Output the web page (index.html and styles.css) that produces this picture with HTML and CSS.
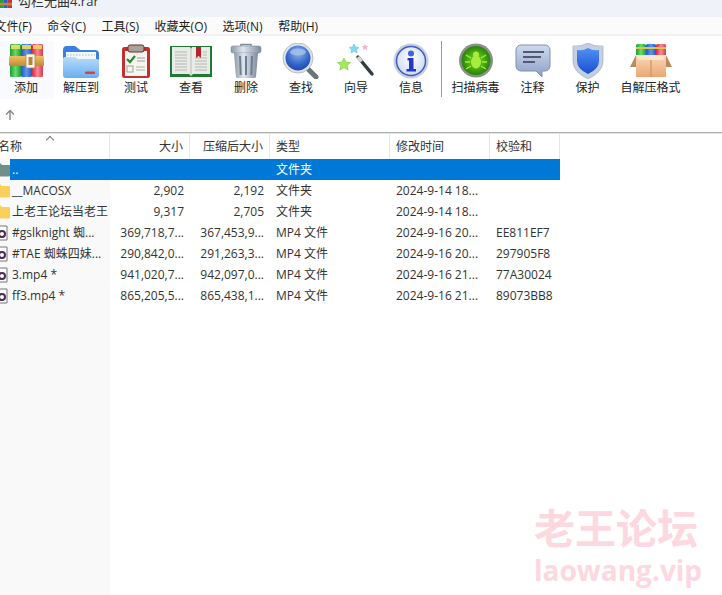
FILE: index.html
```html
<!DOCTYPE html>
<html lang="zh-CN">
<head>
<meta charset="utf-8">
<title>勾栏无曲4.rar</title>
<link rel="stylesheet" href="styles.css">
</head>
<body>
<div class="app">
  <header class="titlebar">
    <svg class="title-icon" viewBox="0 0 14 14"><rect x="0" width="4.5" height="14" fill="#2f9a3c"/><rect x="4.5" width="4.5" height="14" fill="#2a5fc4"/><rect x="9" width="5" height="14" fill="#c8323c"/><rect y="8" width="14" height="3" fill="#b98a3c"/></svg>
    <span class="title-text">勾栏无曲4.rar</span>
  </header>
  <nav class="menubar">
    <span class="menu-item">文件(F)</span><span class="menu-item">命令(C)</span><span class="menu-item">工具(S)</span><span class="menu-item">收藏夹(O)</span><span class="menu-item">选项(N)</span><span class="menu-item">帮助(H)</span>
  </nav>
  <section class="toolbar">
    <div class="tool tool-hover">
      <svg class="tool-icon" viewBox="0 0 44 36">
        <defs>
          <linearGradient id="gGreen" x1="0" y1="0" x2="1" y2="0"><stop offset="0" stop-color="#1f9a3a"/><stop offset=".5" stop-color="#66dc6c"/><stop offset="1" stop-color="#1f9a3a"/></linearGradient>
          <linearGradient id="gBlue" x1="0" y1="0" x2="1" y2="0"><stop offset="0" stop-color="#2457c8"/><stop offset=".5" stop-color="#5a97f0"/><stop offset="1" stop-color="#2457c8"/></linearGradient>
          <linearGradient id="gRed" x1="0" y1="0" x2="1" y2="0"><stop offset="0" stop-color="#d22a3c"/><stop offset=".5" stop-color="#f88a98"/><stop offset="1" stop-color="#d83a4c"/></linearGradient>
          <linearGradient id="gTan" x1="0" y1="0" x2="0" y2="1"><stop offset="0" stop-color="#f2c060"/><stop offset="1" stop-color="#c08a34"/></linearGradient>
          <linearGradient id="gFolder" x1="0" y1="0" x2="0" y2="1"><stop offset="0" stop-color="#b8dcfb"/><stop offset="1" stop-color="#6aaef0"/></linearGradient>
          <linearGradient id="gSteel" x1="0" y1="0" x2="1" y2="0"><stop offset="0" stop-color="#8b98a8"/><stop offset=".4" stop-color="#dfe6ee"/><stop offset="1" stop-color="#7d8a9c"/></linearGradient>
          <radialGradient id="gLens" cx=".5" cy=".3" r=".8"><stop offset="0" stop-color="#8db4ea"/><stop offset=".6" stop-color="#2f63c8"/><stop offset="1" stop-color="#1b3f9c"/></radialGradient>
          <radialGradient id="gBug" cx=".5" cy=".5" r=".55"><stop offset="0" stop-color="#7be01e"/><stop offset="1" stop-color="#1f7a08"/></radialGradient>
          <linearGradient id="gNote" x1="0" y1="0" x2="0" y2="1"><stop offset="0" stop-color="#cfdaf0"/><stop offset="1" stop-color="#8d9fc4"/></linearGradient>
          <linearGradient id="gShield" x1="0" y1="0" x2="0" y2="1"><stop offset="0" stop-color="#4f90f5"/><stop offset="1" stop-color="#1c4fd0"/></linearGradient>
          <linearGradient id="gBox" x1="0" y1="0" x2="0" y2="1"><stop offset="0" stop-color="#f9d9b4"/><stop offset="1" stop-color="#eaa874"/></linearGradient>
          <radialGradient id="gInfo" cx=".5" cy=".4" r=".6"><stop offset="0" stop-color="#ffffff"/><stop offset="1" stop-color="#cfd9f2"/></radialGradient>
        </defs>
        <rect x="6" y="1" width="11" height="33" rx="1.5" fill="url(#gGreen)"/>
        <rect x="17" y="1" width="11" height="33" rx="1.5" fill="url(#gBlue)"/>
        <rect x="28" y="1" width="11" height="33" rx="1.5" fill="url(#gRed)"/>
        <rect x="7" y="2" width="9" height="4" fill="#e2dc5a"/><rect x="18" y="2" width="9" height="4" fill="#e2d45a"/><rect x="29" y="2" width="9" height="4" fill="#f2cc5a"/>
        <rect x="5" y="13" width="35" height="10" rx="1" fill="url(#gTan)"/>
        <rect x="22" y="11" width="9" height="14" rx="1" fill="#f8f5ec" stroke="#a88a50" stroke-width=".8"/>
        <rect x="24.5" y="14" width="4" height="8" fill="#b8843a"/>
      </svg>
      <span class="tool-label">添加</span>
    </div>
    <div class="tool">
      <svg class="tool-icon" viewBox="0 0 44 36">
        <path d="M4 7a4 4 0 0 1 4-4h8l5 4h15a4 4 0 0 1 4 4v6H4z" fill="#3b80e0"/>
        <rect x="7" y="9" width="30" height="9" fill="#f3f7fc"/>
        <path d="M8 12h28" stroke="#a8b8d0" stroke-dasharray="1.5 1.5" stroke-width="1"/>
        <path d="M4 16q0-2 2-2h10l3 2h19q2 0 2 2v14a3 3 0 0 1-3 3H7a3 3 0 0 1-3-3z" fill="url(#gFolder)"/>
        <rect x="26" y="28.5" width="10" height="2.5" rx="1" fill="#d8423c"/>
      </svg>
      <span class="tool-label">解压到</span>
    </div>
    <div class="tool">
      <svg class="tool-icon" viewBox="0 0 44 36">
        <rect x="8" y="4" width="28" height="31" rx="2.5" fill="#c42f30"/>
        <rect x="11" y="8" width="22" height="25" fill="#f7f5f0"/>
        <rect x="14" y="2" width="16" height="7" rx="2" fill="#a8a29a" stroke="#7a2420" stroke-width="1"/>
        <path d="M13 16l3 3 5-6" fill="none" stroke="#2e8a2c" stroke-width="2.2"/>
        <path d="M23 15h8M23 18h8" stroke="#9a9a9a"/>
        <rect x="13" y="23" width="6" height="6" fill="none" stroke="#a0a0a0"/>
        <path d="M22 24h9M22 27h9" stroke="#b0b0b0"/>
      </svg>
      <span class="tool-label">测试</span>
    </div>
    <div class="tool">
      <svg class="tool-icon" viewBox="0 0 44 36">
        <path d="M1 3h42v31H1z" fill="#1f7a34"/>
        <path d="M3 4h18l1 2 1-2h18v27H24l-2 2-2-2H3z" fill="#e9ebe6"/>
        <path d="M22 6v26" stroke="#b9bdb6"/>
        <path d="M6 9h12M6 12h12M6 15h12M6 18h12M6 21h12M6 24h12M6 27h12M26 15h12M26 18h12M26 21h12M26 24h12M26 27h12M34 9h4M34 12h4" stroke="#b4b8b2"/>
        <path d="M27 4h5v11l-2.500-2-2.500 2z" fill="#b8222c"/>
      </svg>
      <span class="tool-label">查看</span>
    </div>
    <div class="tool">
      <svg class="tool-icon" viewBox="0 0 44 36">
        <path d="M17 3V1.500h10V3" fill="none" stroke="#7d8a9c" stroke-width="1.500"/>
        <rect x="7" y="3" width="30" height="7" rx="2" fill="url(#gSteel)" stroke="#7d8a9c" stroke-width=".6"/>
        <path d="M10 10h24l-2 24a2 2 0 0 1-2 1H14a2 2 0 0 1-2-1z" fill="url(#gSteel)"/>
        <path d="M16 13l.7 19M22 13v19M28 13l-.7 19" stroke="#6f7d90" stroke-width="2"/>
      </svg>
      <span class="tool-label">删除</span>
    </div>
    <div class="tool">
      <svg class="tool-icon" viewBox="0 0 44 36">
        <path d="M28 25l9 9" stroke="#6b7478" stroke-width="5" stroke-linecap="round"/>
        <circle cx="19" cy="15" r="15" fill="#dfe4ec" stroke="#b4bcc8"/>
        <circle cx="19" cy="15" r="12.500" fill="url(#gLens)"/>
        <ellipse cx="19" cy="9" rx="8" ry="3.500" fill="#a6c2ee" opacity=".8"/>
      </svg>
      <span class="tool-label">查找</span>
    </div>
    <div class="tool">
      <svg class="tool-icon" viewBox="0 0 44 36">
        <path d="M24 14l14 17" stroke="#333c40" stroke-width="3.500" stroke-linecap="round"/>
        <path d="M24 14l3.500 4.500" stroke="#d5d5d5" stroke-width="3.500"/>
        <path d="M10 15l2 4 4.500.5-3.300 3 1 4.500L10 24.500 5.800 27l1-4.500-3.300-3L8 19z" fill="#a6e85a" stroke="#79c43a" stroke-width=".6"/>
        <path d="M20 1l1.500 3 3.500.4-2.500 2.300.7 3.300-3.200-1.700-3 1.700.6-3.300-2.400-2.300 3.300-.4z" fill="#7fdcf2" stroke="#4fc0e0" stroke-width=".5"/>
        <path d="M31 1l1 2 2.300.3-1.700 1.500.5 2.200-2.100-1.100-2 1.100.4-2.200-1.600-1.500 2.200-.3z" fill="#f4b4c8"/>
      </svg>
      <span class="tool-label">向导</span>
    </div>
    <div class="tool">
      <svg class="tool-icon" viewBox="0 0 44 36">
        <circle cx="22" cy="18" r="17.500" fill="#c6cfe0"/>
        <circle cx="22" cy="18" r="14.500" fill="url(#gInfo)" stroke="#3f5cc0" stroke-width="1.500"/>
        <circle cx="22" cy="10.500" r="3" fill="#3f66d0"/>
        <path d="M18.500 15h6v11h2.500v2.500H17.500V26h2.500v-8.500h-1.500z" fill="#2438c8"/>
      </svg>
      <span class="tool-label">信息</span>
    </div>
    <div class="tool-sep"></div>
    <div class="tool">
      <svg class="tool-icon" viewBox="0 0 44 36">
        <circle cx="22" cy="17.500" r="17" fill="#8a8f8a"/>
        <circle cx="22" cy="17.500" r="14.500" fill="url(#gBug)"/>
        <ellipse cx="22" cy="19" rx="5" ry="6.500" fill="#a8ec3c"/>
        <circle cx="22" cy="11.500" r="3" fill="#a8ec3c"/>
        <path d="M17 15l-5-3M27 15l5-3M16 19h-5M28 19h5M17 23l-5 3M27 23l5 3" stroke="#a8ec3c" stroke-width="1.300"/>
      </svg>
      <span class="tool-label">扫描病毒</span>
    </div>
    <div class="tool">
      <svg class="tool-icon" viewBox="0 0 44 36">
        <path d="M10 2h24a5 5 0 0 1 5 5v16a5 5 0 0 1-5 5h-3v6l-6-6H10a5 5 0 0 1-5-5V7a5 5 0 0 1 5-5z" fill="url(#gNote)" stroke="#7f90b4"/>
        <path d="M12 9h21M12 14h18M12 19h12" stroke="#4f5a72" stroke-width="2"/>
      </svg>
      <span class="tool-label">注释</span>
    </div>
    <div class="tool">
      <svg class="tool-icon" viewBox="0 0 44 36">
        <path d="M22 0q7 4 15 3v15q0 11-15 18Q7 29 7 18V3q8 1 15-3z" fill="#c4cfe0" stroke="#97a6bd" stroke-width=".6"/>
        <path d="M22 5q5 3 11 2v11q0 8-11 13-11-5-11-13V7q6 1 11-2z" fill="url(#gShield)"/>
      </svg>
      <span class="tool-label">保护</span>
    </div>
    <div class="tool">
      <svg class="tool-icon" viewBox="0 0 44 36">
        <rect x="7" y="1" width="10" height="20" rx="1.500" fill="url(#gGreen)"/>
        <rect x="17" y="1" width="10" height="20" rx="1.500" fill="url(#gBlue)"/>
        <rect x="27" y="1" width="10" height="20" rx="1.500" fill="url(#gRed)"/>
        <rect x="7" y="4" width="30" height="2" fill="#d8c84a"/>
        <path d="M7 12h30v22H7z" fill="url(#gBox)"/>
        <path d="M7 12L1 24h6zM37 12l6 12h-6z" fill="#b98a5c"/>
        <path d="M7 12h30l-3 5H10z" fill="#fbe6c8"/>
        <path d="M22 17v17" stroke="#c98a58"/>
      </svg>
      <span class="tool-label">自解压格式</span>
    </div>
  </section>
  <div class="pathbar">
    <svg class="up-icon" viewBox="0 0 12 12"><path d="M6 11V2M2 5.500L6 1.500l4 4" fill="none" stroke="#8a8a8a" stroke-width="1.500"/></svg>
  </div>
  <main class="list">
    <div class="row head">
      <div class="cell name sep"><span class="caret"></span><span class="head-name">名称</span></div>
      <div class="cell num sep">大小</div>
      <div class="cell num sep">压缩后大小</div>
      <div class="cell sep">类型</div>
      <div class="cell sep">修改时间</div>
      <div class="cell sep">校验和</div>
    </div>
    <div class="row selected">
      <div class="cell name"><svg class="file-icon" viewBox="0 0 16 16"><path d="M1 2q0-1 1-1h4l2 2h7q1 0 1 1v9.500q0 1-1 1H2q-1 0-1-1z" fill="#6f8f8a"/></svg><span class="dots">..</span></div>
      <div class="cell num"></div><div class="cell num"></div><div class="cell">文件夹</div><div class="cell"></div><div class="cell"></div>
    </div>
    <div class="row">
      <div class="cell name"><svg class="file-icon" viewBox="0 0 16 16"><path d="M1 2q0-1 1-1h4l2 2h7q1 0 1 1v9.500q0 1-1 1H2q-1 0-1-1z" fill="#fad05a"/></svg>__MACOSX</div>
      <div class="cell num">2,902</div><div class="cell num">2,192</div><div class="cell">文件夹</div><div class="cell">2024-9-14 18...</div><div class="cell"></div>
    </div>
    <div class="row">
      <div class="cell name"><svg class="file-icon" viewBox="0 0 16 16"><path d="M1 2q0-1 1-1h4l2 2h7q1 0 1 1v9.500q0 1-1 1H2q-1 0-1-1z" fill="#fad05a"/></svg>上老王论坛当老王</div>
      <div class="cell num">9,317</div><div class="cell num">2,705</div><div class="cell">文件夹</div><div class="cell">2024-9-14 18...</div><div class="cell"></div>
    </div>
    <div class="row">
      <div class="cell name"><svg class="file-icon" viewBox="0 0 16 16"><path d="M2 1h11v14H2z" fill="#fff" stroke="#777"/><circle cx="8" cy="9" r="3" fill="none" stroke="#4a2c50" stroke-width="2"/></svg>#gslknight 蜘...</div>
      <div class="cell num">369,718,7...</div><div class="cell num">367,453,9...</div><div class="cell">MP4 文件</div><div class="cell">2024-9-16 20...</div><div class="cell">EE811EF7</div>
    </div>
    <div class="row">
      <div class="cell name"><svg class="file-icon" viewBox="0 0 16 16"><path d="M2 1h11v14H2z" fill="#fff" stroke="#777"/><circle cx="8" cy="9" r="3" fill="none" stroke="#4a2c50" stroke-width="2"/></svg>#TAE 蜘蛛四妹...</div>
      <div class="cell num">290,842,0...</div><div class="cell num">291,263,3...</div><div class="cell">MP4 文件</div><div class="cell">2024-9-16 20...</div><div class="cell">297905F8</div>
    </div>
    <div class="row">
      <div class="cell name"><svg class="file-icon" viewBox="0 0 16 16"><path d="M2 1h11v14H2z" fill="#fff" stroke="#777"/><circle cx="8" cy="9" r="3" fill="none" stroke="#4a2c50" stroke-width="2"/></svg>3.mp4 *</div>
      <div class="cell num">941,020,7...</div><div class="cell num">942,097,0...</div><div class="cell">MP4 文件</div><div class="cell">2024-9-16 21...</div><div class="cell">77A30024</div>
    </div>
    <div class="row">
      <div class="cell name"><svg class="file-icon" viewBox="0 0 16 16"><path d="M2 1h11v14H2z" fill="#fff" stroke="#777"/><circle cx="8" cy="9" r="3" fill="none" stroke="#4a2c50" stroke-width="2"/></svg>ff3.mp4 *</div>
      <div class="cell num">865,205,5...</div><div class="cell num">865,438,1...</div><div class="cell">MP4 文件</div><div class="cell">2024-9-16 21...</div><div class="cell">89073BB8</div>
    </div>
  </main>
</div>
<div class="watermark">
  <div class="wm-cn">老王论坛</div>
  <div class="wm-en">laowang.vip</div>
</div>
</body>
</html>
```
FILE: styles.css
```css
* { box-sizing: border-box; }
html, body { margin: 0; height: 100%; overflow: hidden; background: #fff; }
body {
  font-family: "Open Sans", "Noto Sans CJK SC", sans-serif;
  font-size: 12px;
  color: #1c1c1c;
}
.app { display: flex; flex-direction: column; height: 595px; }

.titlebar {
  height: 17px;
  flex: none;
  background: #eff2f8;
  display: flex;
  align-items: flex-end;
  overflow: hidden;
}
.title-icon { width: 12px; height: 12px; flex: none; margin-bottom: 9px; }
.title-text { font-size: 13px; line-height: 18px; margin: 0 0 0 6px; position: relative; top: -7px; color: #333; }

.menubar {
  height: 19px;
  flex: none;
  display: flex;
  align-items: center;
  margin-left: -5.5px;
  background: #fbfbfc;
  border-bottom: 2px solid #f1f1f1;
}
.menu-item { margin-right: 15.5px; white-space: nowrap; }

.toolbar {
  height: 63px;
  flex: none;
  display: flex;
  align-items: flex-start;
  margin-left: -1.5px;
  padding-top: 5px;
}
.tool {
  min-width: 55px;
  padding: 2px 5.5px 0;
  height: 58px;
  display: flex;
  flex-direction: column;
  align-items: center;
  flex: none;
}
.tool-hover { background: #f8fafd; border-radius: 2px; }
.tool-icon { width: 44px; height: 36px; flex: none; }
.tool-label { line-height: 16px; margin-top: 1px; white-space: nowrap; color: #222; }
.tool-sep { width: 1px; height: 56px; background: #9a9a9a; margin: 0 4px 0 2.5px; flex: none; }

.pathbar { height: 34px; flex: none; padding: 10px 0 0 4px; border-bottom: 1px solid #b0b0b0; }
.up-icon { width: 12px; height: 12px; display: block; }

.list {
  flex: 1;
  background: linear-gradient(to right, #f9f9f9 110px, #fff 110px);
  border-top: 1px solid #e4e4e4;
}
.row {
  display: grid;
  grid-template-columns: 110px 80px 80px 120px 100px 70px;
  width: 560px;
  height: 21px;
  line-height: 21px;
  color: #333;
}
.head { height: 25px; line-height: 25px; background: #fff; position: relative; }
.selected { background: linear-gradient(to right, transparent 10px, #0078d7 10px); color: #fff; }
.cell { padding: 0 6px; white-space: nowrap; overflow: hidden; }
.num { text-align: right; }
.sep { border-right: 1px solid #e6e6e6; }
.name { display: flex; align-items: center; padding: 0; margin-left: -6px; gap: 2px; width: 116px; color: #333; }
.head .name { padding-left: 4px; }
.selected .name { color: #fff; }
.file-icon { width: 16px; height: 16px; flex: none; }
.caret {
  position: absolute;
  left: 47px; top: 3px;
  width: 6px; height: 6px;
  border-left: 1px solid #777; border-top: 1px solid #777;
  transform: rotate(45deg);
}

.watermark {
  position: absolute;
  left: 534px; top: 503px;
  width: 175px;
  color: #fdd8e0;
  font-family: "Noto Sans CJK SC", "Liberation Sans", sans-serif;
  font-weight: 700;
}
.wm-cn { font-size: 41px; line-height: 47px; }
.wm-en { font-size: 28px; line-height: 38px; margin-top: 1px; font-family: "Open Sans", sans-serif; }
```
